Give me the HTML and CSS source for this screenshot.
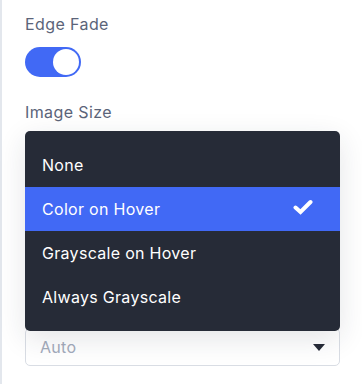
FILE: index.html
```html
<!DOCTYPE html>
<html>
<head>
<meta charset="utf-8">
<link rel="stylesheet" href="styles.css">
</head>
<body>
<div class="panel">
  <div class="label first">Edge Fade</div>
  <div class="toggle"><span class="knob"></span></div>
  <div class="label second">Image Size</div>
  <ul class="menu">
    <li class="item">None</li>
    <li class="item active">Color on Hover
      <svg class="check" width="20" height="16" viewBox="0 0 20 16"><path d="M2.5 8.5 L7.5 13 L17.5 3" fill="none" stroke="#fff" stroke-width="4" stroke-linejoin="miter" stroke-linecap="round"/></svg>
    </li>
    <li class="item">Grayscale on Hover</li>
    <li class="item">Always Grayscale</li>
  </ul>
  <div class="select">
    <span class="placeholder">Auto</span>
    <span class="caret"></span>
  </div>
</div>
</body>
</html>
```
FILE: styles.css
```css
html, body {
  margin: 0;
  padding: 0;
  background: #ffffff;
}
body {
  font-family: Inter, "Noto Sans", sans-serif;
  height: 384px;
  overflow: hidden;
}
.panel {
  border-left: 2px solid #e3e7ed;
  padding: 14px 22px 0 23px;
  height: 384px;
  box-sizing: border-box;
  display: flex;
  flex-direction: column;
}
.label {
  font-size: 16px;
  line-height: 20px;
  letter-spacing: 0.4px;
  color: #5b6479;
  font-weight: 400;
}
.toggle {
  margin-top: 13px;
  width: 56px;
  height: 30px;
  border-radius: 15px;
  background: #4169f5;
  display: flex;
  align-items: center;
  justify-content: flex-end;
  padding: 0 2px;
  box-sizing: border-box;
}
.knob {
  width: 26px;
  height: 26px;
  border-radius: 50%;
  background: #fff;
}
.second {
  margin-top: 25px;
}
.menu {
  list-style: none;
  margin: 9px 0 0 0;
  padding: 12px 0;
  background: #262b37;
  border-radius: 5px;
  position: relative;
  z-index: 2;
  box-shadow: 0 8px 28px rgba(30, 40, 60, 0.12);
}
.item {
  height: 44px;
  display: flex;
  align-items: center;
  justify-content: space-between;
  padding: 0 27px 0 17px;
  color: #ffffff;
  font-size: 16px;
  letter-spacing: 0.3px;
}
.item.active {
  background: #4169f5;
}
.check {
  display: block;
  margin-top: -4px;
}
.select {
  margin-top: -3px;
  height: 38px;
  border: 1px solid #d9dde4;
  border-radius: 5px;
  box-sizing: border-box;
  display: flex;
  align-items: center;
  justify-content: space-between;
  padding: 0 14px 0 14px;
  position: relative;
  z-index: 1;
}
.placeholder {
  color: #a3abbb;
  font-size: 16px;
  letter-spacing: 0.3px;
}
.caret {
  width: 0;
  height: 0;
  border-left: 6px solid transparent;
  border-right: 6px solid transparent;
  border-top: 7px solid #262b37;
}
```
